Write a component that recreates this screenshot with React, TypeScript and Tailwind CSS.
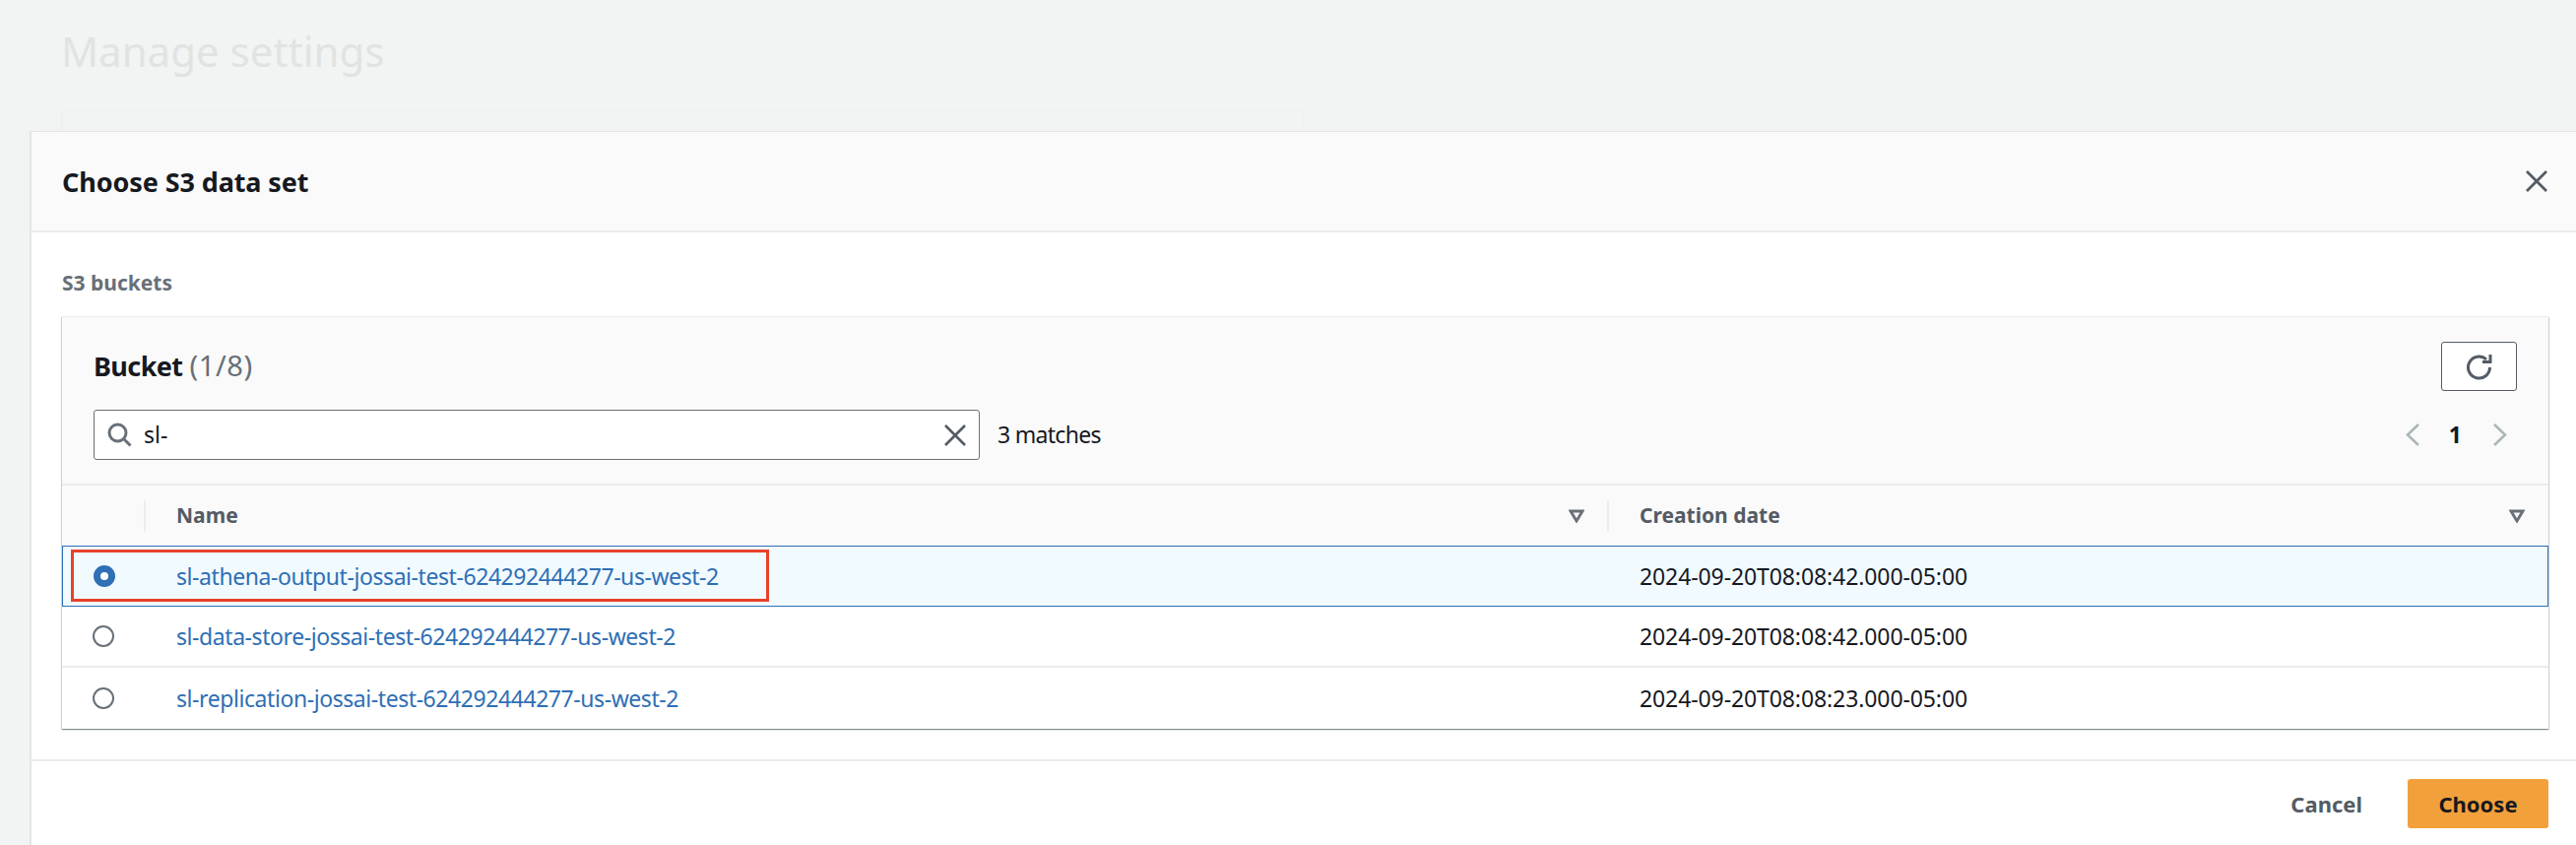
import React from 'react';

const FONT = { fontFamily: '"Noto Sans", "Open Sans", sans-serif' };

const BUCKETS = [
    { name: 'sl-athena-output-jossai-test-624292444277-us-west-2', created: '2024-09-20T08:08:42.000-05:00', selected: true },
    { name: 'sl-data-store-jossai-test-624292444277-us-west-2', created: '2024-09-20T08:08:42.000-05:00', selected: false },
    { name: 'sl-replication-jossai-test-624292444277-us-west-2', created: '2024-09-20T08:08:23.000-05:00', selected: false },
];

function SortCaret() {
    return (
        <svg width="16" height="14" viewBox="0 0 16 14" className="shrink-0">
            <path d="M2 2h12L8 12z" fill="none" stroke="#687078" strokeWidth="2.8" strokeLinejoin="miter" />
        </svg>
    );
}

function Radio({ checked }: { checked: boolean }) {
    if (checked) {
        return <span className="block h-[22px] w-[22px] rounded-full border-[7px] border-[#2f6fb5] bg-white" />;
    }
    return <span className="block h-[22px] w-[22px] rounded-full border-[2px] border-[#687078] bg-white" />;
}

function BucketRow({ name, created, selected, last }: { name: string; created: string; selected: boolean; last: boolean }) {
    const rowClass = selected
        ? 'relative grid h-[62px] grid-cols-[84px_1486px_1fr] items-center border border-[#2f6fb5] bg-[#f1faff]'
        : `grid h-[62px] grid-cols-[85px_1486px_1fr] items-center bg-white ${last ? '' : 'border-b-2 border-[#eaeded]'}`;
    return (
        <div className={rowClass}>
            <div className="flex justify-center pr-[1px]">
                <Radio checked={selected} />
            </div>
            <div className="pl-[31px] text-[23px] leading-none tracking-[-0.43px] text-[#2f6fb5]">{name}</div>
            <div className="pl-[31px] text-[23px] leading-none tracking-[-0.1px] text-[#16191f]">{created}</div>
            {selected && (
                <div className="absolute left-[8px] top-[3px] h-[53px] w-[709px] border-[3px] border-[#e8412a]" />
            )}
        </div>
    );
}

export default function App() {
    return (
        <div style={FONT} className="relative h-[858px] w-[2616px] overflow-hidden bg-[#f2f3f3]">
            {/* Page behind the modal */}
            <div className="pl-[62px] pt-[27px]">
                <h1 className="text-[42px] font-normal leading-[50px] text-[#e1e3e3]">Manage settings</h1>
                <div className="mt-[35px] flex h-[40px] w-[1263px] border-l-2 border-r-2 border-t border-[#eff1f1]" />
            </div>

            {/* Modal */}
            <div className="absolute bottom-0 left-[30px] right-0 top-[133px] border-l-2 border-t border-[#e3e6e6] bg-white">
                <div className="flex h-[102px] items-center justify-between border-b-2 border-[#eaeded] bg-[#fafafa] pl-[31px] pr-[29px]">
                    <h2 className="text-[27px] font-bold leading-none tracking-[-0.1px] text-[#16191f]">Choose S3 data set</h2>
                    <svg width="22" height="22" viewBox="0 0 22 22">
                        <path d="M1 1l20 20M21 1L1 21" stroke="#545b64" strokeWidth="2.8" fill="none" />
                    </svg>
                </div>

                <div className="pl-[31px] pr-[28px]">
                    <div className="pt-[39px] text-[21px] font-bold leading-[24px] text-[#687078]">S3 buckets</div>

                    <div className="mt-[22px] bg-white shadow-[0_1px_1px_0_rgba(0,28,36,0.3),1px_1px_1px_0_rgba(0,28,36,0.15),-1px_1px_1px_0_rgba(0,28,36,0.15)]">
                        {/* Panel header */}
                        <div className="h-[172px] border-b-2 border-t border-[#eaeded] bg-[#fafafa] pl-[32px] pr-[32px]">
                            <div className="flex items-start justify-between pt-[25px]">
                                <div className="pt-[6px] text-[27px] leading-[36px]">
                                    <span className="font-bold tracking-[-0.6px] text-[#16191f]">Bucket</span>{' '}
                                    <span className="text-[29px] tracking-[0.6px] text-[#687078]">(1/8)</span>
                                </div>
                                <button className="flex h-[50px] w-[77px] items-center justify-center rounded-[3px] border border-[#545b64] bg-white">
                                    <svg width="27" height="27" viewBox="0 0 27 27">
                                        <path d="M24.5 14a11 11 0 1 1-3.5-8" fill="none" stroke="#545b64" strokeWidth="3" />
                                        <path d="M25 1v7.5h-8" fill="none" stroke="#545b64" strokeWidth="3" />
                                    </svg>
                                </button>
                            </div>
                            <div className="mt-[19px] flex items-center">
                                <div className="flex h-[51px] w-[900px] items-center rounded-[3px] border border-[#687078] bg-white pl-[13px] pr-[13px]">
                                    <svg width="25" height="25" viewBox="0 0 25 25" className="shrink-0">
                                        <circle cx="10.5" cy="10.5" r="8.5" fill="none" stroke="#687078" strokeWidth="3" />
                                        <path d="M16.5 16.5L23.5 23.5" stroke="#687078" strokeWidth="3" fill="none" />
                                    </svg>
                                    <span className="ml-[12px] flex-1 text-[23px] leading-none text-[#16191f]">sl-</span>
                                    <svg width="22" height="22" viewBox="0 0 22 22" className="shrink-0">
                                        <path d="M1 1l20 20M21 1L1 21" stroke="#545b64" strokeWidth="2.6" fill="none" />
                                    </svg>
                                </div>
                                <span className="ml-[18px] text-[23px] leading-none tracking-[-0.7px] text-[#16191f]">3 matches</span>
                                <div className="ml-auto flex items-center pr-[9px]">
                                    <svg width="16" height="25" viewBox="0 0 16 25">
                                        <path d="M14 2L3 12.5 14 23" fill="none" stroke="#aab7b8" strokeWidth="2.6" />
                                    </svg>
                                    <span className="ml-[29px] mr-[31px] text-[23px] font-bold leading-none text-[#16191f]">1</span>
                                    <svg width="16" height="25" viewBox="0 0 16 25">
                                        <path d="M2 2l11 10.5L2 23" fill="none" stroke="#aab7b8" strokeWidth="2.6" />
                                    </svg>
                                </div>
                            </div>
                        </div>

                        {/* Table head */}
                        <div className="grid h-[61px] grid-cols-[85px_1486px_1fr] items-center bg-[#fafafa]">
                            <div className="h-[32px] border-r-2 border-[#eaeded]" />
                            <div className="flex h-[32px] items-center justify-between border-r-2 border-[#eaeded] pl-[31px] pr-[23px] text-[21px] font-bold leading-none text-[#545b64]">
                                <span>Name</span>
                                <SortCaret />
                            </div>
                            <div className="flex h-[32px] items-center justify-between pl-[31px] pr-[24px] text-[21px] font-bold leading-none text-[#545b64]">
                                <span>Creation date</span>
                                <SortCaret />
                            </div>
                        </div>

                        {BUCKETS.map((bucket, i) => (
                            <BucketRow key={bucket.name} {...bucket} last={i === BUCKETS.length - 1} />
                        ))}
                    </div>
                </div>

                {/* Footer */}
                <div className="mt-[31px] flex items-center justify-end border-t-2 border-[#eaeded] pr-[28px] pt-[18px]">
                    <span className="mr-[46px] text-[22px] font-bold leading-none text-[#545b64]">Cancel</span>
                    <button className="flex h-[50px] w-[143px] items-center justify-center rounded-[3px] bg-[#f2a03b] text-[22px] font-bold leading-none text-[#16191f]">
                        Choose
                    </button>
                </div>
            </div>
        </div>
    );
}
